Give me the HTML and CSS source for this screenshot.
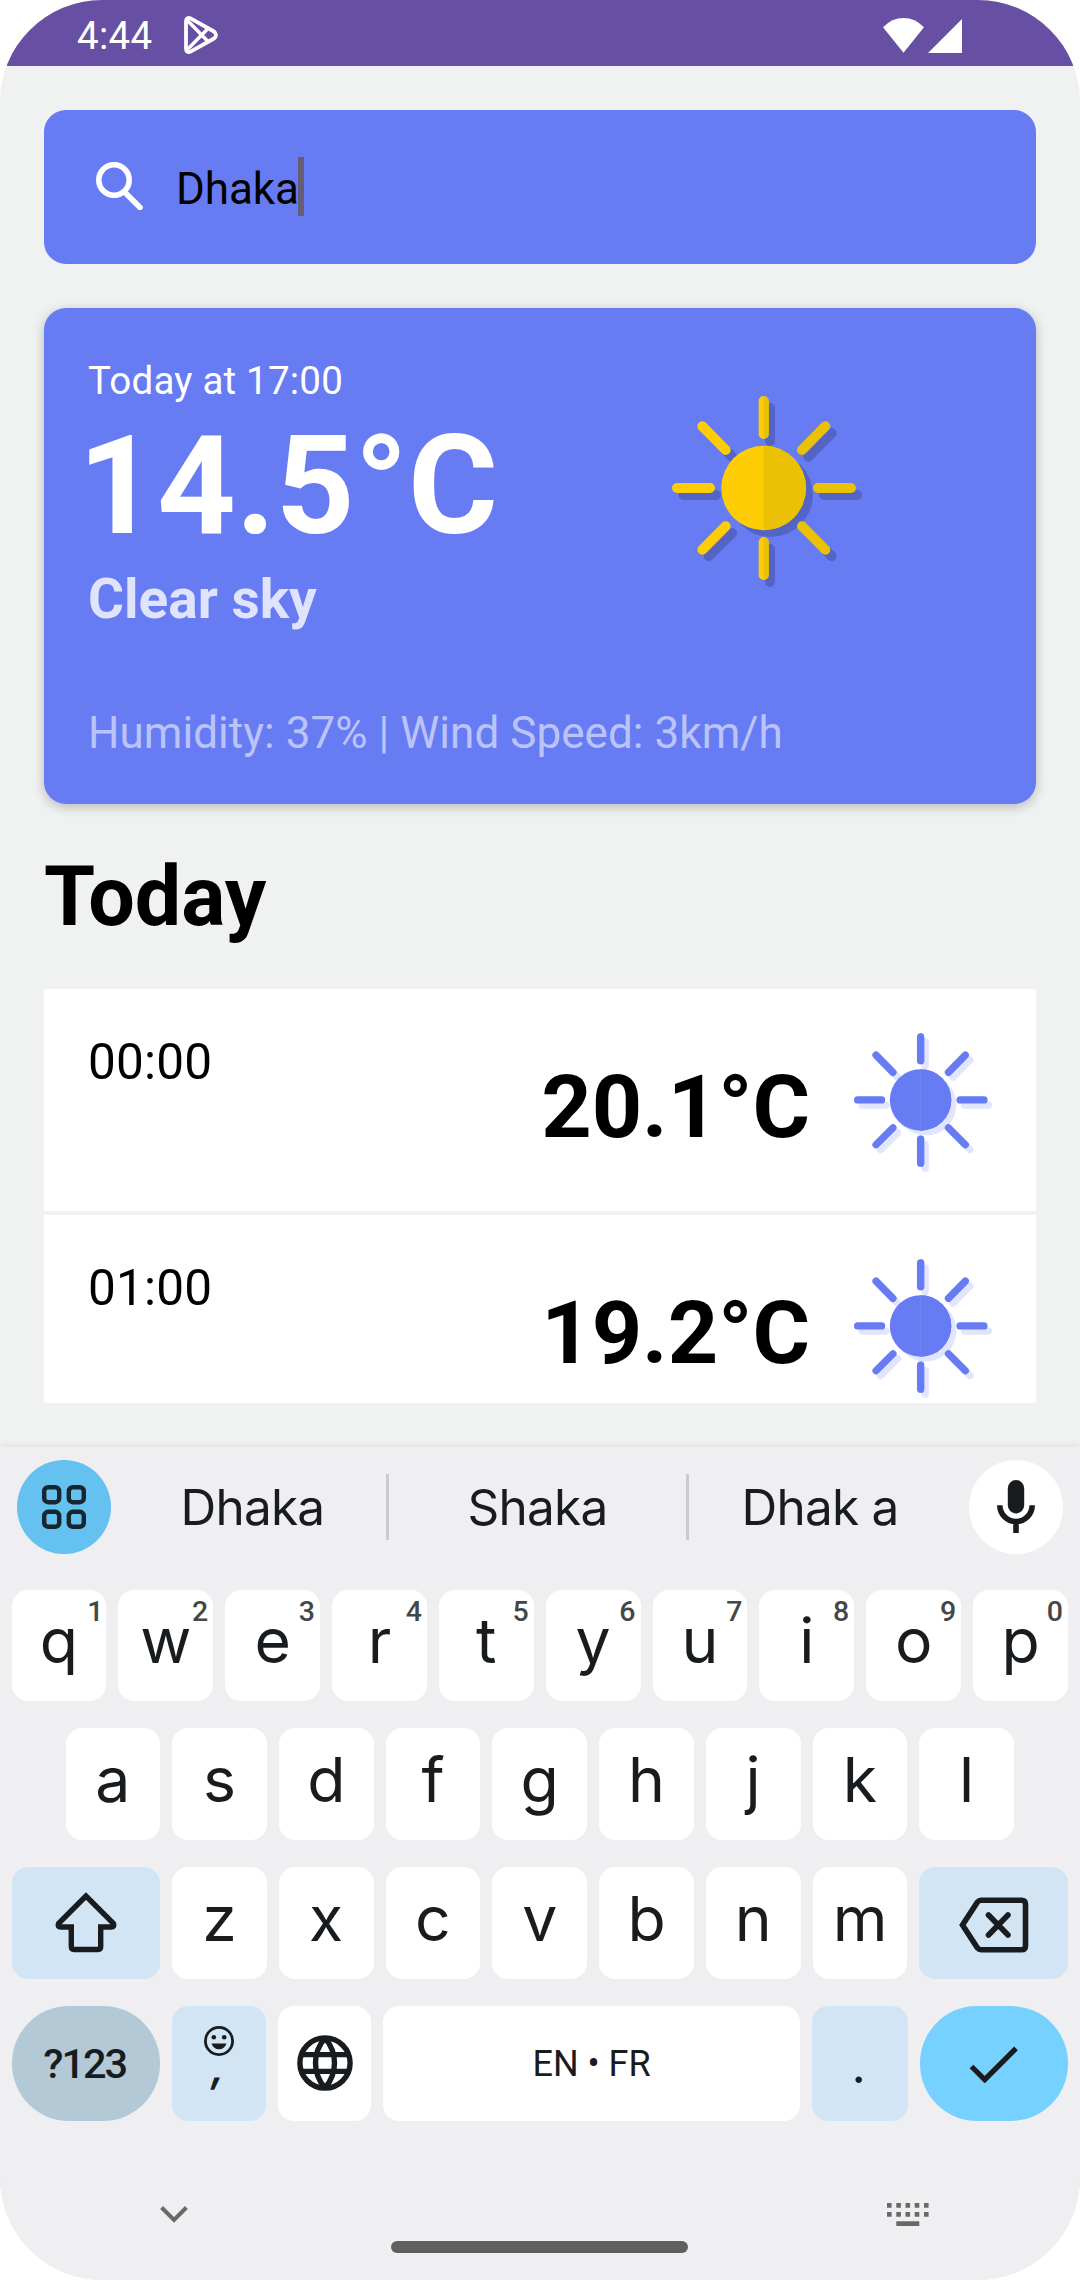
FILE: index.html
```html
<!DOCTYPE html>
<html lang="en">
<head>
<meta charset="utf-8">
<title>Weather</title>
<link rel="stylesheet" href="styles.css">
</head>
<body>
<svg width="0" height="0" class="defs">
  <symbol id="rays" viewBox="0 0 570 573">
    <g fill="none" stroke="var(--shade)" stroke-width="30" stroke-linecap="round">
      <path d="M294 36V135M294 459V558M34 297H132M456 297H555M110 111L180 182M409 182L479 111M110 481L180 411M409 411L479 481"/>
    </g>
    <circle cx="296" cy="296" r="127" fill="var(--shade)"/>
    <g fill="none" stroke="var(--left)" stroke-width="30" stroke-linecap="round">
      <path d="M275 15V114M275 438V537M15 276H114M91 91L161 162M91 461L161 391"/>
    </g>
    <path d="M275 0a15 15 0 0 1 15 15V114a15 15 0 0 1-15 15ZM275 423a15 15 0 0 1 15 15V537a15 15 0 0 1-15 15Z" fill="var(--right)"/>
    <g fill="none" stroke="var(--right)" stroke-width="30" stroke-linecap="round">
      <path d="M438 276H537M390 162L460 91M390 391L460 461"/>
    </g>
    <circle cx="275" cy="276" r="127" fill="var(--left)"/>
    <path d="M275 149a127 127 0 0 1 0 254Z" fill="var(--right)"/>
    <path d="M275 149V403" stroke="var(--seam)" stroke-width="3"/>
  </symbol>
</svg>

<div class="screen">
  <header class="status">
    <span class="clock">4:44</span>
    <svg class="play" viewBox="0 0 34 38" fill="none" stroke="#fff" stroke-width="3.8" stroke-linejoin="round">
      <path d="M2 5.5Q2 0.5 7 2.6L30 15.5Q34 19 30 22.5L7 35.4Q2 37.5 2 32.5Z"/>
      <path d="M3 4L24.5 26M3 34L24.5 12" stroke-width="3.4"/>
    </svg>
    <svg class="signals" viewBox="0 0 79 35" fill="#fff">
      <path d="M0 9.3Q9 0 20.5 0T41 9.3L20.5 34.7Z"/>
      <path d="M79 1V35H45Z"/>
    </svg>
  </header>

  <main class="app">
    <div class="search">
      <svg class="search-icon" viewBox="0 0 48 48" fill="none" stroke="#fff">
        <circle cx="18" cy="18" r="15.2" stroke-width="5.6"/>
        <path d="M31 32.5L44 45.5" stroke-width="5.6" stroke-linecap="round"/>
      </svg>
      <span class="query">Dhaka</span><span class="caret"></span>
    </div>

    <section class="card">
      <div class="card-top">
        <div>
          <div class="when">Today at 17:00</div>
          <div class="temp">14.5°C</div>
          <div class="sky">Clear sky</div>
        </div>
        <svg class="sun sun-big"><use href="#rays"/></svg>
      </div>
      <div class="details">Humidity: 37% | Wind Speed: 3km/h</div>
    </section>

    <h1 class="title">Today</h1>
    <div class="hours">
      <div class="hour">
        <span class="time">00:00</span><span class="deg">20.1°C</span>
        <svg class="sun sun-small"><use href="#rays"/></svg>
      </div>
      <div class="hour">
        <span class="time">01:00</span><span class="deg">19.2°C</span>
        <svg class="sun sun-small"><use href="#rays"/></svg>
      </div>
    </div>
  </main>

  <section class="keyboard">
    <div class="suggestions">
      <div class="round round-blue">
        <svg width="44" height="44" viewBox="0 0 44 44" fill="none" stroke="#16272f" stroke-width="4.4">
          <rect x="2.2" y="2.2" width="15" height="15" rx="4"/><rect x="26.8" y="2.2" width="15" height="15" rx="4"/>
          <rect x="2.2" y="26.8" width="15" height="15" rx="4"/><rect x="26.8" y="26.8" width="15" height="15" rx="4"/>
        </svg>
      </div>
      <div class="words">
        <span class="word">Dhaka</span><i class="bar"></i><span class="word">Shaka</span><i class="bar"></i><span class="word">Dhak a</span>
      </div>
      <div class="round">
        <svg width="38" height="54" viewBox="0 0 38 54">
          <rect x="10.8" y="0" width="16.4" height="33.5" rx="8.2" fill="#191c1e"/>
          <path d="M2.8 25.3a16.2 16.2 0 0 0 32.4 0M19 41V53" fill="none" stroke="#191c1e" stroke-width="5.6"/>
        </svg>
      </div>
    </div>

    <div class="row row-1">
      <div class="key">q<sup>1</sup></div><div class="key">w<sup>2</sup></div><div class="key">e<sup>3</sup></div><div class="key">r<sup>4</sup></div><div class="key">t<sup>5</sup></div><div class="key">y<sup>6</sup></div><div class="key">u<sup>7</sup></div><div class="key">i<sup>8</sup></div><div class="key">o<sup>9</sup></div><div class="key">p<sup>0</sup></div>
    </div>
    <div class="row row-2">
      <div class="key">a</div><div class="key">s</div><div class="key">d</div><div class="key">f</div><div class="key">g</div><div class="key">h</div><div class="key">j</div><div class="key">k</div><div class="key">l</div>
    </div>
    <div class="row row-3">
      <div class="key side soft">
        <svg class="shift" width="64" height="62" viewBox="0 0 64 62" fill="none" stroke="#191c1e" stroke-width="5.4">
          <path d="M32 5L4.5 32.5Q3 36 7 36H17.3V55.5Q17.3 58.5 20 58.5H44Q46.7 58.5 46.7 55.5V36H57Q61 36 59.5 32.5Z"/>
        </svg>
      </div>
      <div class="key">z</div><div class="key">x</div><div class="key">c</div><div class="key">v</div><div class="key">b</div><div class="key">n</div><div class="key">m</div>
      <div class="key side soft">
        <svg class="delete" width="70" height="56" viewBox="0 0 70 56" fill="none" stroke="#191c1e" stroke-width="5.6">
          <path d="M3.5 28L18.5 5Q20 3.3 22 3.3H62.5Q66.5 3.3 66.5 7.3V48.7Q66.5 52.7 62.5 52.7H22Q20 52.7 18.5 51Z"/>
          <path d="M29.5 18L49 38M49 18L29.5 38" stroke-linecap="round"/>
        </svg>
      </div>
    </div>
    <div class="row row-4">
      <div class="key side symbols">?123</div>
      <div class="key soft comma">
        <svg width="30" height="30" viewBox="0 0 30 30">
          <circle cx="15" cy="15" r="13.6" fill="none" stroke="#191c1e" stroke-width="2.8"/>
          <circle cx="9.8" cy="11.3" r="2.3" fill="#191c1e"/><circle cx="20.2" cy="11.3" r="2.3" fill="#191c1e"/>
          <path d="M7.5 17.5H22.5Q20.5 23.3 15 23.3T7.5 17.5Z" fill="#191c1e"/>
        </svg>
        <span>,</span>
      </div>
      <div class="key">
        <svg class="globe" width="56" height="56" viewBox="0 0 56 56" fill="none" stroke="#191c1e" stroke-width="5.4">
          <circle cx="28" cy="28" r="25.1"/>
          <path d="M4 19.6H52M4 36.4H52M28 3Q18.5 14 18.5 28T28 53M28 3Q37.5 14 37.5 28T28 53"/>
        </svg>
      </div>
      <div class="key space">EN • FR</div>
      <div class="key soft period">.</div>
      <div class="key side enter">
        <svg width="50" height="38" viewBox="0 0 50 38" fill="none" stroke="#191c1e" stroke-width="5.2"><path d="M2.5 21.5L15.7 34.7L47 3.3"/></svg>
      </div>
    </div>

    <footer class="nav">
      <svg class="chevron" width="28" height="17" viewBox="0 0 28 17" fill="none" stroke="#686869" stroke-width="4"><path d="M1.6 1.5L14 14L26.4 1.5"/></svg>
      <div class="home"></div>
      <svg class="switcher" width="42" height="23" viewBox="0 0 42 23" fill="#686869">
        <path d="M0 0h4.6v4.8H0zM9.3 0h4.6v4.8H9.3zM18.5 0h4.6v4.8H18.5zM27.7 0h4.6v4.8H27.7zM37 0h4.6v4.8H37zM0 9h4.6v4.8H0zM9.3 9h4.6v4.8H9.3zM18.5 9h4.6v4.8H18.5zM27.7 9h4.6v4.8H27.7zM37 9h4.6v4.8H37zM9.3 18.2H32.3V23H9.3z"/>
      </svg>
    </footer>
  </section>
</div>
</body>
</html>
```
FILE: styles.css
```css
* { box-sizing: border-box; }
body { margin: 0; background: #fff; font-family: Roboto, "Noto Sans", sans-serif; color: #000; }
svg { display: block; flex: none; }
.defs { position: absolute; }

.screen {
  width: 1080px;
  height: 2280px;
  border-radius: 102px;
  overflow: hidden;
  display: flex;
  flex-direction: column;
  background: #f0f2f1;
}

.status {
  height: 66px;
  flex: none;
  background: #6750a3;
  color: #fff;
  display: flex;
  align-items: center;
  padding: 0 118px 0 77px;
}
.clock { font-size: 38.5px; line-height: 46px; margin-top: 6px; letter-spacing: .3px; }
.play { width: 34px; height: 38px; margin: 4px 0 0 32px; }
.signals { width: 79px; height: 35px; margin: 4px 0 0 auto; }

.app { height: 1381px; flex: none; padding: 44px 44px 0; }

.search {
  height: 154px;
  border-radius: 22px;
  background: #677cf3;
  display: flex;
  align-items: center;
  padding-left: 52px;
}
.search-icon { width: 48px; height: 48px; margin: 0 32px 3px 0; }
.query { font-size: 44px; line-height: 52px; padding-top: 3px; letter-spacing: -.1px; }
.caret { width: 6px; height: 59px; margin: 0 0 1px -1px; background: #655d75; }

.card {
  height: 496px;
  margin-top: 44px;
  padding: 50px 44px 0;
  border-radius: 22px;
  background: #677cf3;
  box-shadow: 0 3px 12px rgba(0, 0, 0, .24);
  color: #fff;
}
.card-top { display: flex; justify-content: space-between; align-items: flex-start; }
.when { font-size: 38.5px; line-height: 45px; letter-spacing: .2px; }
.temp { font-size: 137.5px; line-height: 162px; font-weight: 700; margin: 2px 0 0 -10px; }
.sky { font-size: 55px; line-height: 64px; font-weight: 700; color: #dfe3fb; }
.details { font-size: 44px; line-height: 52px; margin-top: 76px; letter-spacing: .05px; color: #bac4fa; }

.sun-big {
  width: 190px; height: 191px; margin: 38px 130px 0 0;
  --left: #ffcd05; --right: #eac104; --shade: #5464c4; --seam: transparent;
}
.sun-small {
  width: 138px; height: 139px; margin-left: 44px;
  --left: #677cf3; --right: #677cf3; --shade: #e1e5fd; --seam: #7387f4;
}

.title { margin: 44px 0; font-size: 82.5px; line-height: 97px; font-weight: 700; }

.hours { height: 414px; overflow: hidden; display: flex; flex-direction: column; gap: 4px; }
.hour { height: 222px; flex: none; background: #fff; padding: 44px 44px 0; display: flex; align-items: flex-start; }
.time { font-size: 49.5px; line-height: 58px; letter-spacing: .2px; }
.deg { font-size: 88px; line-height: 103px; font-weight: 700; margin: 22px 0 0 auto; }

.keyboard {
  flex: 1;
  background: #efeff1;
  box-shadow: 0 -1px 8px rgba(0, 0, 0, .08);
  font-family: Inter, Roboto, sans-serif;
  color: #191c1e;
  display: flex;
  flex-direction: column;
}
.suggestions { height: 94px; margin: 13px 17px 36px; display: flex; align-items: center; }
.round { width: 94px; height: 94px; border-radius: 50%; background: #fff; flex: none; display: flex; align-items: center; justify-content: center; }
.round-blue { background: #65c1ef; }
.words { flex: 1; display: grid; grid-template-columns: 275px 3px 297px 3px 1fr; align-items: center; }
.word { text-align: center; font-size: 49.5px; line-height: 60px; letter-spacing: -.8px; white-space: nowrap; }
.word:first-child { padding-left: 8px; }
.word:last-child { padding-right: 18px; }
.bar { width: 3px; height: 66px; background: #cacbcd; }

.row { display: flex; gap: 12px; height: 112px; margin: 0 12px 27px 11.5px; }
.row-1 { height: 111px; }
.row-2 { padding: 0 54px; }
.row-4 { height: 115px; }
.key {
  position: relative;
  flex: 1 1 0;
  background: #fff;
  border-radius: 16px;
  display: flex;
  align-items: center;
  justify-content: center;
  font-size: 62.5px;
  line-height: 74px;
  padding-bottom: 11px;
}
.key sup {
  position: absolute;
  right: 5px;
  top: 5px;
  font: 500 28.5px/34px Roboto, sans-serif;
  color: #444748;
}
.row-1 .key:first-child sup { right: 3px; }
.side { flex: 0 0 148.5px; padding-bottom: 0; }
.soft { background: #d2e5f4; }
.symbols { background: #b4c9d6; border-radius: 57px; font: 500 41.5px/50px Roboto, sans-serif; letter-spacing: -2px; padding-right: 2px; }
.comma { flex-direction: column; justify-content: flex-start; padding: 20px 0 0; }
.comma span { font-size: 42px; font-weight: 600; line-height: 40px; height: 40px; margin-top: -9px; transform: skewX(-10deg); }
.globe { margin-top: 10px; }
.space { flex: 0 0 416.5px; font: 400 36px/44px Roboto, sans-serif; padding-bottom: 0; }
.period { font-size: 50px; padding: 3px 2px 0 0; }
.shift { margin-bottom: 3px; }
.delete { margin-top: 4px; }
.enter { background: #77d1ff; border-radius: 57px; }

.nav { flex: 1; display: grid; grid-template-columns: 391px 297px 1fr; padding-top: 55px; }
.chevron { margin: 3px 0 0 159.5px; }
.home { height: 12px; border-radius: 6px; background: #606060; margin-top: 38px; }
.switcher { margin-left: 199px; }
```
